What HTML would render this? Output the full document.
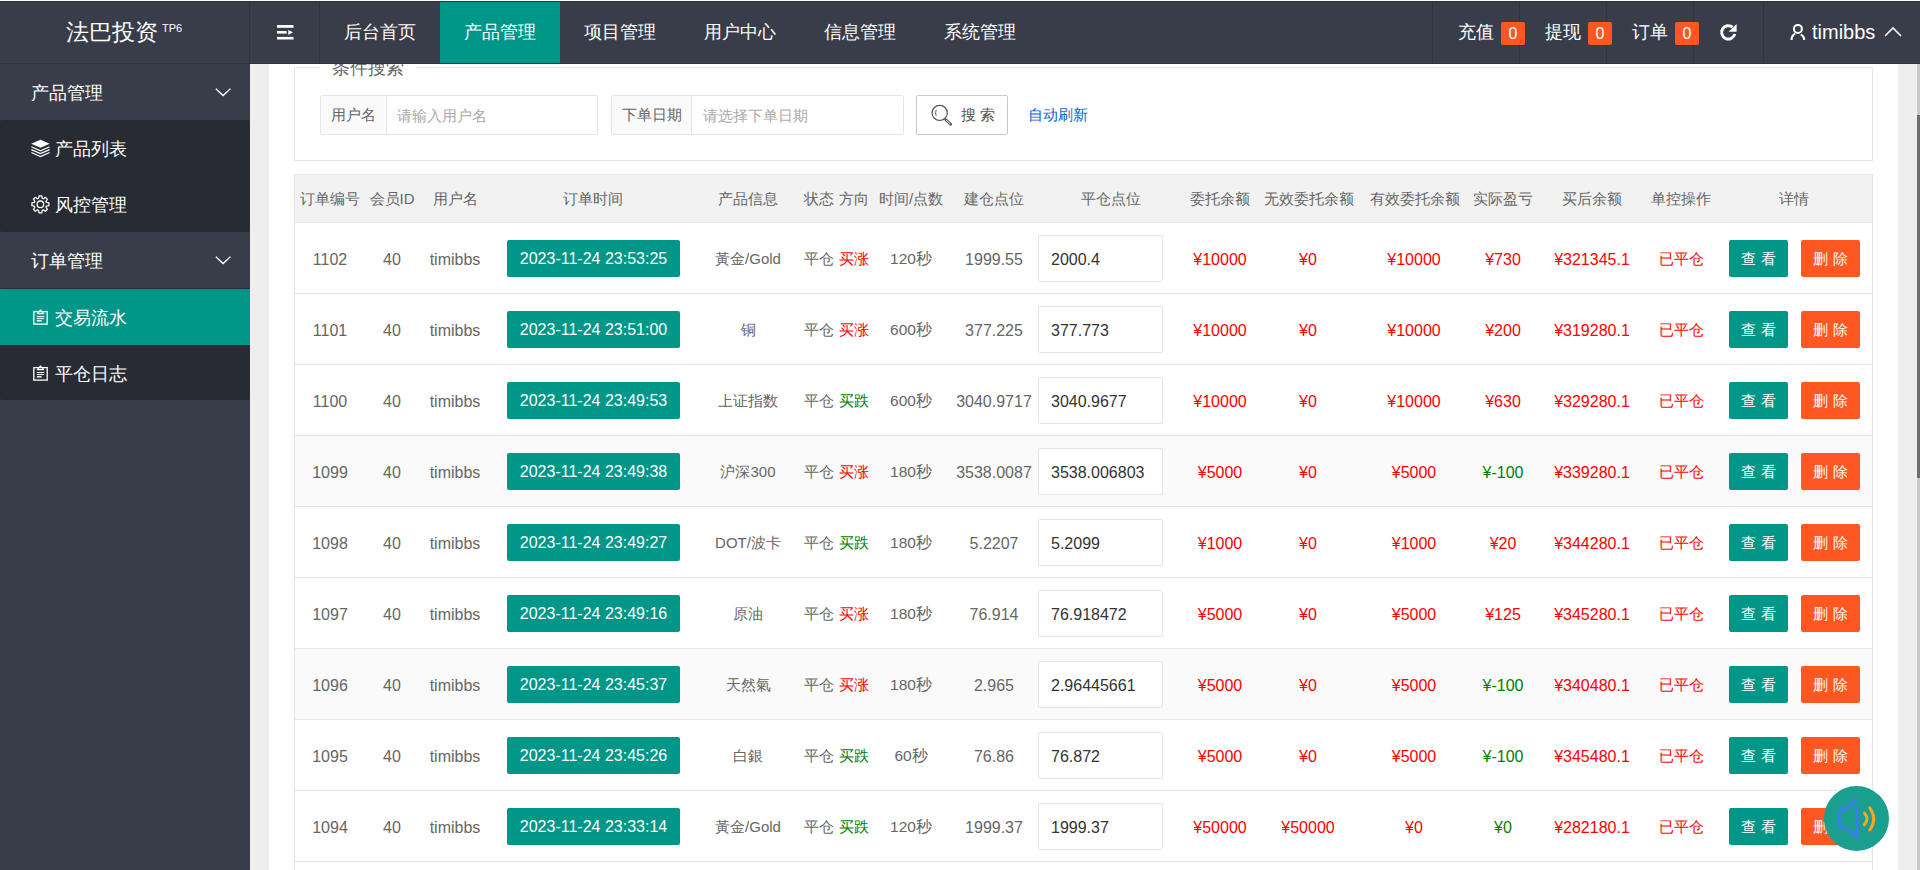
<!DOCTYPE html>
<html><head><meta charset="utf-8"><title>交易流水</title>
<style>
*{margin:0;padding:0;box-sizing:border-box}
html,body{width:1920px;height:870px;overflow:hidden;background:#fff;font-family:"Liberation Sans",sans-serif;color:#666}
.abs{position:absolute}
#hdr{position:absolute;left:0;top:0;width:1920px;height:64px;background:#393D49;border-top:1px solid #2b2e37;z-index:5}
#hdr .sep{position:absolute;top:0;width:1px;height:63px;background:#30333d}
#hdr .hb{position:absolute;left:0;top:62px;width:1920px;height:1px;background:#30333d}
.logo{position:absolute;left:66px;top:15px;font-size:23px;color:#fff;line-height:32px;white-space:nowrap}
.logo sup{font-size:11px;position:relative;top:-8px;left:4px;vertical-align:baseline}
.nav{position:absolute;top:0;height:63px;line-height:63px;font-size:18px;color:#fff;white-space:nowrap;text-align:center;width:120px}
.nav.on{background:#009688}
.rt{position:absolute;top:0;height:63px;line-height:63px;font-size:18px;color:#fff;white-space:nowrap}
.badge{position:absolute;top:21px;width:24px;height:23px;line-height:23px;background:#FF5722;color:#fff;border-radius:2px;font-size:16px;text-align:center}
#side{position:absolute;left:0;top:64px;width:250px;height:806px;background:#393D49}
.sh{position:absolute;left:0;width:250px;height:56px;line-height:58px;color:#fff;font-size:18px;padding-left:31px}
.si{position:absolute;left:0;width:250px;height:56px;line-height:58px;color:#fff;font-size:18px;padding-left:55px}
.sub{position:absolute;left:0;width:250px;background:#282B33;border-radius:2px}
.chev{position:absolute;left:215px;top:24px}
.sicon{position:absolute;left:31px}
#gap{position:absolute;left:250px;top:64px;width:19px;height:806px;background:#EEEEEE}
#sbtrack{position:absolute;left:1898px;top:64px;width:19px;height:806px;background:#EEEEEE}
#sb{position:absolute;left:1917px;top:64px;width:3px;height:806px;background:#C8C8C8}
#sbthumb{position:absolute;left:1917px;top:115px;width:3px;height:363px;background:#6E6E6E}
#field{position:absolute;left:294px;top:67px;width:1579px;height:94px;border:1px solid #e6e6e6}
.legend{position:absolute;left:320px;top:56px;width:96px;height:24px;background:#fff;font-size:18px;line-height:24px;color:#666;padding-left:12px}
.ig{position:absolute;top:95px;height:40px;border:1px solid #e6e6e6;border-radius:2px;background:#fff}
.ig .lb{position:absolute;left:0;top:0;height:38px;line-height:38px;background:#FAFAFA;border-right:1px solid #e6e6e6;color:#666;font-size:15px;text-align:center}
.ig .ph{position:absolute;top:0;height:38px;line-height:39px;color:#aaa;font-size:15px}
.sbtn{position:absolute;left:916px;top:95px;width:92px;height:40px;border:1px solid #C9C9C9;border-radius:2px;background:#fff;color:#555;font-size:15px;line-height:38px}
.auto{position:absolute;left:1028px;top:105px;font-size:15px;line-height:20px;color:#0b62d0}
#tbl{position:absolute;left:294px;top:174px;width:1579px;height:700px;border:1px solid #e6e6e6;border-bottom:none}
#th{position:absolute;left:295px;top:175px;width:1577px;height:48px;background:#F2F2F2;border-bottom:1px solid #e6e6e6}
.row{position:absolute;left:295px;width:1577px;height:71px;border-bottom:1px solid #e6e6e6;background:#fff}
.row.alt{background:#FAFAFA}
.th{position:absolute;top:189px;width:200px;text-align:center;font-size:15px;line-height:20px;color:#666;white-space:nowrap}
.c{position:absolute;top:26px;width:200px;margin-left:-295px;text-align:center;font-size:15px;line-height:20px;color:#666;white-space:nowrap}
.c.lat{font-size:16px;top:27px}
.c.mix{font-size:15.5px}
.c.red{color:#FF0000}
.c.grn{color:#008000}
.dt{position:absolute;left:212px;top:17px;width:173px;height:37px;background:#009688;border-radius:2px;color:#fff;font-size:16px;line-height:37px;text-align:center;white-space:nowrap}
.inp{position:absolute;left:743px;top:12px;width:125px;height:47px;border:1px solid #e6e6e6;border-radius:2px;background:#fff;color:#333;font-size:16px;line-height:47px;padding-left:12px;white-space:nowrap}
.bt{position:absolute;top:17px;width:59px;height:37px;border-radius:2px;color:#fff;font-size:15px;line-height:37px;text-align:center;white-space:nowrap}
.bt.g{left:1434px;background:#009688}
.bt.o{left:1506px;background:#FF5722}
#float{position:absolute;left:1824px;top:786px;width:65px;height:65px;border-radius:50%;background:#1A9E8E;z-index:6}
</style></head><body>

<div id="gap"></div>
<div id="sbtrack"></div>
<div id="sb"></div>
<div id="sbthumb"></div>

<div id="field"></div>
<div class="legend">条件搜索</div>
<div class="ig" style="left:320px;width:278px"><div class="lb" style="width:66px">用户名</div><div class="ph" style="left:76px">请输入用户名</div></div>
<div class="ig" style="left:611px;width:293px"><div class="lb" style="width:80px">下单日期</div><div class="ph" style="left:91px">请选择下单日期</div></div>
<div class="sbtn">
  <svg class="abs" style="left:14px;top:8px" width="22" height="22" viewBox="931 104 22 22"><circle cx="939.7" cy="112.9" r="7.6" fill="none" stroke="#555" stroke-width="1.2"/><path d="M936.2 109.8 Q934.9 112.8 936.2 115.8" fill="none" stroke="#555" stroke-width="1"/><path d="M945.8 119.8 L950.6 124.2" stroke="#555" stroke-width="2.8" stroke-linecap="round"/><path d="M946.4 120.4 L950 123.6" stroke="#fff" stroke-width="0.9" stroke-linecap="round"/></svg>
  <span class="abs" style="left:44px;top:0">搜 索</span>
</div>
<div class="auto">自动刷新</div>

<div id="tbl"></div>
<div id="th"></div>
<div class="th" style="left:230px">订单编号</div>
<div class="th" style="left:292px">会员ID</div>
<div class="th" style="left:355px">用户名</div>
<div class="th" style="left:493px">订单时间</div>
<div class="th" style="left:648px">产品信息</div>
<div class="th" style="left:719px">状态</div>
<div class="th" style="left:754px">方向</div>
<div class="th" style="left:811px">时间/点数</div>
<div class="th" style="left:894px">建仓点位</div>
<div class="th" style="left:1011px">平仓点位</div>
<div class="th" style="left:1120px">委托余额</div>
<div class="th" style="left:1209px">无效委托余额</div>
<div class="th" style="left:1315px">有效委托余额</div>
<div class="th" style="left:1403px">实际盈亏</div>
<div class="th" style="left:1492px">买后余额</div>
<div class="th" style="left:1581px">单控操作</div>
<div class="th" style="left:1694px">详情</div>

<div class="row" style="top:223px"><div class="c lat" style="left:230px">1102</div><div class="c lat" style="left:292px">40</div><div class="c lat" style="left:355px">timibbs</div><div class="dt">2023-11-24 23:53:25</div><div class="c " style="left:648px">黃金/Gold</div><div class="c " style="left:719px">平仓</div><div class="c red" style="left:754px">买涨</div><div class="c mix" style="left:811px">120秒</div><div class="c lat" style="left:894px">1999.55</div><div class="inp">2000.4</div><div class="c lat red" style="left:1120px">¥10000</div><div class="c lat red" style="left:1208px">¥0</div><div class="c lat red" style="left:1314px">¥10000</div><div class="c lat red" style="left:1403px">¥730</div><div class="c lat red" style="left:1492px">¥321345.1</div><div class="c red" style="left:1581px">已平仓</div><div class="bt g">查 看</div><div class="bt o">删 除</div></div>
<div class="row" style="top:294px"><div class="c lat" style="left:230px">1101</div><div class="c lat" style="left:292px">40</div><div class="c lat" style="left:355px">timibbs</div><div class="dt">2023-11-24 23:51:00</div><div class="c " style="left:648px">铜</div><div class="c " style="left:719px">平仓</div><div class="c red" style="left:754px">买涨</div><div class="c mix" style="left:811px">600秒</div><div class="c lat" style="left:894px">377.225</div><div class="inp">377.773</div><div class="c lat red" style="left:1120px">¥10000</div><div class="c lat red" style="left:1208px">¥0</div><div class="c lat red" style="left:1314px">¥10000</div><div class="c lat red" style="left:1403px">¥200</div><div class="c lat red" style="left:1492px">¥319280.1</div><div class="c red" style="left:1581px">已平仓</div><div class="bt g">查 看</div><div class="bt o">删 除</div></div>
<div class="row" style="top:365px"><div class="c lat" style="left:230px">1100</div><div class="c lat" style="left:292px">40</div><div class="c lat" style="left:355px">timibbs</div><div class="dt">2023-11-24 23:49:53</div><div class="c " style="left:648px">上证指数</div><div class="c " style="left:719px">平仓</div><div class="c grn" style="left:754px">买跌</div><div class="c mix" style="left:811px">600秒</div><div class="c lat" style="left:894px">3040.9717</div><div class="inp">3040.9677</div><div class="c lat red" style="left:1120px">¥10000</div><div class="c lat red" style="left:1208px">¥0</div><div class="c lat red" style="left:1314px">¥10000</div><div class="c lat red" style="left:1403px">¥630</div><div class="c lat red" style="left:1492px">¥329280.1</div><div class="c red" style="left:1581px">已平仓</div><div class="bt g">查 看</div><div class="bt o">删 除</div></div>
<div class="row alt" style="top:436px"><div class="c lat" style="left:230px">1099</div><div class="c lat" style="left:292px">40</div><div class="c lat" style="left:355px">timibbs</div><div class="dt">2023-11-24 23:49:38</div><div class="c " style="left:648px">沪深300</div><div class="c " style="left:719px">平仓</div><div class="c red" style="left:754px">买涨</div><div class="c mix" style="left:811px">180秒</div><div class="c lat" style="left:894px">3538.0087</div><div class="inp">3538.006803</div><div class="c lat red" style="left:1120px">¥5000</div><div class="c lat red" style="left:1208px">¥0</div><div class="c lat red" style="left:1314px">¥5000</div><div class="c lat grn" style="left:1403px">¥-100</div><div class="c lat red" style="left:1492px">¥339280.1</div><div class="c red" style="left:1581px">已平仓</div><div class="bt g">查 看</div><div class="bt o">删 除</div></div>
<div class="row" style="top:507px"><div class="c lat" style="left:230px">1098</div><div class="c lat" style="left:292px">40</div><div class="c lat" style="left:355px">timibbs</div><div class="dt">2023-11-24 23:49:27</div><div class="c " style="left:648px">DOT/波卡</div><div class="c " style="left:719px">平仓</div><div class="c grn" style="left:754px">买跌</div><div class="c mix" style="left:811px">180秒</div><div class="c lat" style="left:894px">5.2207</div><div class="inp">5.2099</div><div class="c lat red" style="left:1120px">¥1000</div><div class="c lat red" style="left:1208px">¥0</div><div class="c lat red" style="left:1314px">¥1000</div><div class="c lat red" style="left:1403px">¥20</div><div class="c lat red" style="left:1492px">¥344280.1</div><div class="c red" style="left:1581px">已平仓</div><div class="bt g">查 看</div><div class="bt o">删 除</div></div>
<div class="row" style="top:578px"><div class="c lat" style="left:230px">1097</div><div class="c lat" style="left:292px">40</div><div class="c lat" style="left:355px">timibbs</div><div class="dt">2023-11-24 23:49:16</div><div class="c " style="left:648px">原油</div><div class="c " style="left:719px">平仓</div><div class="c red" style="left:754px">买涨</div><div class="c mix" style="left:811px">180秒</div><div class="c lat" style="left:894px">76.914</div><div class="inp">76.918472</div><div class="c lat red" style="left:1120px">¥5000</div><div class="c lat red" style="left:1208px">¥0</div><div class="c lat red" style="left:1314px">¥5000</div><div class="c lat red" style="left:1403px">¥125</div><div class="c lat red" style="left:1492px">¥345280.1</div><div class="c red" style="left:1581px">已平仓</div><div class="bt g">查 看</div><div class="bt o">删 除</div></div>
<div class="row alt" style="top:649px"><div class="c lat" style="left:230px">1096</div><div class="c lat" style="left:292px">40</div><div class="c lat" style="left:355px">timibbs</div><div class="dt">2023-11-24 23:45:37</div><div class="c " style="left:648px">天然氣</div><div class="c " style="left:719px">平仓</div><div class="c red" style="left:754px">买涨</div><div class="c mix" style="left:811px">180秒</div><div class="c lat" style="left:894px">2.965</div><div class="inp">2.96445661</div><div class="c lat red" style="left:1120px">¥5000</div><div class="c lat red" style="left:1208px">¥0</div><div class="c lat red" style="left:1314px">¥5000</div><div class="c lat grn" style="left:1403px">¥-100</div><div class="c lat red" style="left:1492px">¥340480.1</div><div class="c red" style="left:1581px">已平仓</div><div class="bt g">查 看</div><div class="bt o">删 除</div></div>
<div class="row" style="top:720px"><div class="c lat" style="left:230px">1095</div><div class="c lat" style="left:292px">40</div><div class="c lat" style="left:355px">timibbs</div><div class="dt">2023-11-24 23:45:26</div><div class="c " style="left:648px">白銀</div><div class="c " style="left:719px">平仓</div><div class="c grn" style="left:754px">买跌</div><div class="c mix" style="left:811px">60秒</div><div class="c lat" style="left:894px">76.86</div><div class="inp">76.872</div><div class="c lat red" style="left:1120px">¥5000</div><div class="c lat red" style="left:1208px">¥0</div><div class="c lat red" style="left:1314px">¥5000</div><div class="c lat grn" style="left:1403px">¥-100</div><div class="c lat red" style="left:1492px">¥345480.1</div><div class="c red" style="left:1581px">已平仓</div><div class="bt g">查 看</div><div class="bt o">删 除</div></div>
<div class="row" style="top:791px"><div class="c lat" style="left:230px">1094</div><div class="c lat" style="left:292px">40</div><div class="c lat" style="left:355px">timibbs</div><div class="dt">2023-11-24 23:33:14</div><div class="c " style="left:648px">黃金/Gold</div><div class="c " style="left:719px">平仓</div><div class="c grn" style="left:754px">买跌</div><div class="c mix" style="left:811px">120秒</div><div class="c lat" style="left:894px">1999.37</div><div class="inp">1999.37</div><div class="c lat red" style="left:1120px">¥50000</div><div class="c lat red" style="left:1208px">¥50000</div><div class="c lat red" style="left:1314px">¥0</div><div class="c lat grn" style="left:1403px">¥0</div><div class="c lat red" style="left:1492px">¥282180.1</div><div class="c red" style="left:1581px">已平仓</div><div class="bt g">查 看</div><div class="bt o">删 除</div></div>
<div class="row" style="top:862px"></div>

<div id="float">
  <svg width="65" height="65" viewBox="1824 786 65 65">
    <g fill="none" stroke="#3D7CF0" stroke-width="3" stroke-linecap="round" stroke-linejoin="round">
      <path d="M1856 800.2 L1846 809.6 H1842 Q1839.2 809.6 1839.2 813 V824.5 Q1839.2 827.8 1842 827.8 H1846 L1856.8 837.2 V807.8"/>
    </g>
    <g fill="none" stroke="#F5A623" stroke-width="3" stroke-linecap="round">
      <path d="M1864.6 813.2 Q1869.5 819 1864.4 824.8"/>
      <path d="M1869.8 807.8 Q1877.5 818.8 1869.8 830"/>
    </g>
  </svg>
</div>

<div id="hdr">
  <div class="logo">法巴投资<sup>TP6</sup></div>
  <div class="sep" style="left:249px"></div>
  <svg class="abs" style="left:277px;top:23px" width="17" height="16" viewBox="0 0 17 16"><rect x="0" y="1" width="16.5" height="2.8" fill="#fff"/><rect x="0" y="7" width="9.7" height="2.6" fill="#fff"/><path d="M11.3 5.9 L16 8.3 L11.3 10.9 Z" fill="#fff"/><rect x="0" y="12.9" width="16.5" height="2.6" fill="#fff"/></svg>
  <div class="sep" style="left:319px"></div>
  <div class="nav" style="left:320px">后台首页</div>
  <div class="nav on" style="left:440px">产品管理</div>
  <div class="nav" style="left:560px">项目管理</div>
  <div class="nav" style="left:680px">用户中心</div>
  <div class="nav" style="left:800px">信息管理</div>
  <div class="nav" style="left:920px">系统管理</div>

  <div class="sep" style="left:1432px"></div>
  <div class="sep" style="left:1519px"></div>
  <div class="sep" style="left:1606px"></div>
  <div class="sep" style="left:1693px"></div>
  <div class="sep" style="left:1763px"></div>
  <div class="rt" style="left:1458px">充值</div><div class="badge" style="left:1501px">0</div>
  <div class="rt" style="left:1545px">提现</div><div class="badge" style="left:1588px">0</div>
  <div class="rt" style="left:1632px">订单</div><div class="badge" style="left:1675px">0</div>
  <svg class="abs" style="left:1719px;top:22px" width="19" height="19" viewBox="0 0 19 19"><path d="M15.8 11 A6.7 6.7 0 1 1 13.6 4.2" fill="none" stroke="#fff" stroke-width="3"/><path d="M17.6 1 L17.6 8.7 L9.7 8.7 Z" fill="#fff"/></svg>
  <svg class="abs" style="left:1785px;top:17px" width="30" height="28" viewBox="1785 18 30 28"><circle cx="1797.9" cy="28.9" r="4" fill="none" stroke="#fff" stroke-width="2"/><path d="M1791.6 40 A6.6 6.6 0 0 1 1795.3 33.6 M1800.8 34.3 A6.6 6.6 0 0 1 1804.3 40" fill="none" stroke="#fff" stroke-width="2"/></svg>
  <div class="rt" style="left:1812px;font-size:20px">timibbs</div>
  <svg class="abs" style="left:1884px;top:25px" width="18" height="11" viewBox="0 0 18 11"><path d="M1 10 L9 2 L17 10" fill="none" stroke="#fff" stroke-width="1.6"/></svg>
  <div class="hb"></div>
</div>
<div class="abs" style="left:0;top:0;width:1920px;height:1px;background:#fff;z-index:10"></div>
<div class="abs" style="left:0;top:1px;width:1920px;height:1px;background:#2e313c;z-index:10"></div>

<div id="side">
  <div class="sh" style="top:0">产品管理</div>
  <svg class="chev" style="top:24px" width="17" height="10" viewBox="0 0 17 10"><path d="M0.8 0.7 L8.1 7.5 L15.4 0.7" fill="none" stroke="#fff" stroke-width="1.3"/></svg>
  <div class="sub" style="top:56px;height:112px"></div>
  <svg class="abs" style="left:26px;top:70px" width="30" height="28" viewBox="26 134 30 28"><path d="M31.2 143.8 L40.5 139.8 L49.7 143.8 L40.5 147.8 Z" fill="#fff"/><path d="M31.4 146.7 L40.5 150.7 L49.6 146.7 M31.4 149.6 L40.5 153.6 L49.6 149.6 M31.4 152.5 L40.5 156.5 L49.6 152.5" fill="none" stroke="#fff" stroke-width="1.25"/></svg>
  <div class="si" style="top:56px">产品列表</div>
  <svg class="abs" style="left:26px;top:126px" width="30" height="30" viewBox="26 190 30 30"><g fill="none" stroke="#fff" stroke-width="1.3" stroke-linejoin="round"><path d="M38.56 198.28 L39.05 195.81 L41.75 195.81 L42.24 198.28 L43.36 198.74 L45.45 197.34 L47.36 199.25 L45.96 201.34 L46.42 202.46 L48.89 202.95 L48.89 205.65 L46.42 206.14 L45.96 207.26 L47.36 209.35 L45.45 211.26 L43.36 209.86 L42.24 210.32 L41.75 212.79 L39.05 212.79 L38.56 210.32 L37.44 209.86 L35.35 211.26 L33.44 209.35 L34.84 207.26 L34.38 206.14 L31.91 205.65 L31.91 202.95 L34.38 202.46 L34.84 201.34 L33.44 199.25 L35.35 197.34 L37.44 198.74 Z"/><circle cx="40.4" cy="204.3" r="3.3"/></g></svg>
  <div class="si" style="top:112px">风控管理</div>
  <div class="sh" style="top:168px">订单管理</div>
  <svg class="chev" style="top:192px" width="17" height="10" viewBox="0 0 17 10"><path d="M0.8 0.7 L8.1 7.5 L15.4 0.7" fill="none" stroke="#fff" stroke-width="1.3"/></svg>
  <div class="sub" style="top:224px;height:112px"></div>
  <div class="abs" style="left:0;top:225px;width:250px;height:56px;background:#009688"></div>
  <svg class="abs" style="left:25px;top:236px" width="30" height="35" viewBox="25 300 30 35"><g fill="none" stroke="#fff" stroke-width="1.3"><rect x="33.8" y="311.6" width="13.4" height="12.5"/><path d="M37.3 313.6 L40.5 309.8 L43.7 313.6 Z" stroke-width="1.1" stroke-linejoin="round"/><path d="M36.8 316.6 H44.2 M36.8 318.6 H44.2" stroke-width="1"/><path d="M36.8 320.8 H41.7" stroke-width="1.4"/></g></svg>
  <div class="si" style="top:225px">交易流水</div>
  <svg class="abs" style="left:25px;top:292px" width="30" height="35" viewBox="25 300 30 35"><g fill="none" stroke="#fff" stroke-width="1.3"><rect x="33.8" y="311.6" width="13.4" height="12.5"/><path d="M37.3 313.6 L40.5 309.8 L43.7 313.6 Z" stroke-width="1.1" stroke-linejoin="round"/><path d="M36.8 316.6 H44.2 M36.8 318.6 H44.2" stroke-width="1"/><path d="M36.8 320.8 H41.7" stroke-width="1.4"/></g></svg>
  <div class="si" style="top:281px">平仓日志</div>
</div>

</body></html>
